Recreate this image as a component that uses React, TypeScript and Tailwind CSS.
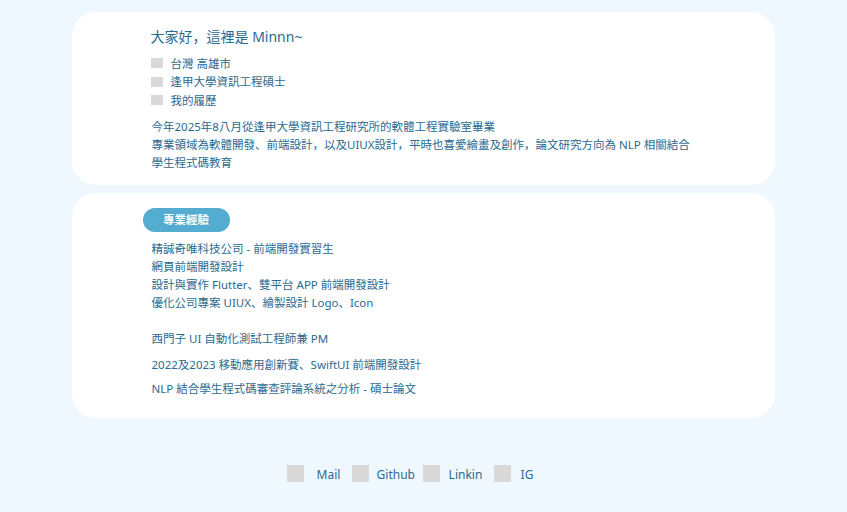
import React from 'react';

const font = { fontFamily: '"Noto Sans", "Noto Sans CJK JP", sans-serif' };

const infoItems = ['台灣 高雄市', '逢甲大學資訊工程碩士', '我的履歷'];

const expTop = [
  '精誠奇唯科技公司 - 前端開發實習生',
  '網頁前端開發設計',
  '設計與實作 Flutter、雙平台 APP 前端開發設計',
  '優化公司專案 UIUX、繪製設計 Logo、Icon',
];

const links = [
  { label: 'Mail', w: 'w-[65px]', gap: 'gap-[13px]' },
  { label: 'Github', w: 'w-[71px]', gap: 'gap-[8px]' },
  { label: 'Linkin', w: 'w-[71px]', gap: 'gap-[9px]' },
  { label: 'IG', w: 'w-auto', gap: 'gap-[10px]' },
];

export default function App() {
  return (
    <div
      className="min-h-[512px] w-full bg-[#eef8fe] text-[#2b6a90] [text-spacing-trim:space-all]"
      style={font}
    >
      <div className="flex flex-col items-center pt-[12px] pr-px">
        {/* intro card */}
        <section className="w-[703px] rounded-[24px] bg-white pl-[79px] pr-8 pt-[13px] pb-[13px]">
          <h1 className="text-[14px] leading-[24px]">大家好，這裡是 Minnn~</h1>
          <ul className="mt-[5px] flex flex-col">
            {infoItems.map((t) => (
              <li key={t} className="flex h-[18.5px] items-center gap-[8px] text-[11.5px]">
                <span className="h-[10px] w-[12px] bg-[#d9d9d9]" />
                <span>{t}</span>
              </li>
            ))}
          </ul>
          <div className="mt-[8px] pl-px text-[11.5px] leading-[18px]">
            <p>今年2025年8八月從逢甲大學資訊工程研究所的軟體工程實驗室畢業</p>
            <p>專業領域為軟體開發、前端設計，以及UIUX設計，平時也喜愛繪畫及創作，論文研究方向為 NLP 相關結合</p>
            <p>學生程式碼教育</p>
          </div>
        </section>

        {/* experience card */}
        <section className="mt-[8px] w-[703px] rounded-[24px] bg-white pl-[80px] pr-8 pt-[15px] pb-[20px]">
          <div className="-ml-[9px] flex h-[24px] w-[87px] items-center justify-center rounded-full bg-[#54acd0] text-[11.5px] font-bold text-white">
            專業經驗
          </div>
          <div className="mt-[8px] flex flex-col text-[11.5px]">
            {expTop.map((t) => (
              <p key={t} className="leading-[18.3px]">{t}</p>
            ))}
            <p className="mt-[17px] leading-[18px]">西門子 UI 自動化測試工程師兼 PM</p>
            <p className="mt-[8px] leading-[18px]">2022及2023 移動應用創新賽、SwiftUI 前端開發設計</p>
            <p className="mt-[6px] leading-[18px]">NLP 結合學生程式碼審查評論系統之分析 - 碩士論文</p>
          </div>
        </section>

        {/* footer links */}
        <footer className="mt-[47px] flex items-center pr-[26px] text-[12px] leading-[17px]">
          {links.map((l) => (
            <a key={l.label} className={`flex items-center ${l.w} ${l.gap}`}>
              <span className="h-[17px] w-[17px] bg-[#d9d9d9]" />
              <span className="pt-px">{l.label}</span>
            </a>
          ))}
        </footer>
      </div>
    </div>
  );
}
